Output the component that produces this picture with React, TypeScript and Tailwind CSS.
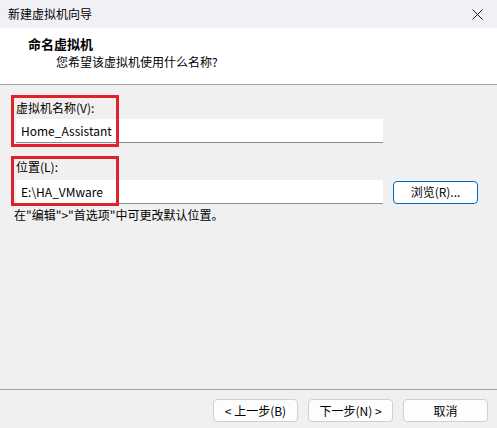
export default function App() {
  const font = { fontFamily: '"Noto Sans CJK SC", "Liberation Sans", sans-serif' };

  return (
    <div
      className="relative flex flex-col w-[497px] h-[428px] bg-[#f0f0f0] text-[12px] text-black overflow-hidden"
      style={font}
    >
      {/* title bar */}
      <div className="flex items-center justify-between h-[28px] bg-[#f0f1f5] pl-[8px] pr-[14px]">
        <span className="leading-[16px]">新建虚拟机向导</span>
        <svg width="11" height="11" viewBox="0 0 11 11">
          <path d="M0.5 0.5 L10.5 10.5 M10.5 0.5 L0.5 10.5" stroke="#1a1a1a" strokeWidth="1" />
        </svg>
      </div>

      {/* header */}
      <div className="h-[57px] bg-white border-b border-[#a0a0a0] pl-[28px] pt-[7px]">
        <div className="font-bold text-[13px] leading-[17px]">命名虚拟机</div>
        <div className="pl-[28px] mt-[1px] leading-[17px]">您希望该虚拟机使用什么名称?</div>
      </div>

      {/* body */}
      <div className="flex-1 pl-[16px] pr-[19px]">
        <div className="mt-[15px] leading-[16px]">虚拟机名称(V):</div>
        <div className="mt-[3px] h-[24px] w-[367px] bg-white border-b border-[#8c8c8c] pl-[5px] flex items-center">
          Home_Assistant
        </div>

        <div className="mt-[16px] leading-[16px]">位置(L):</div>
        <div className="mt-[5px] flex items-center">
          <div className="h-[24px] w-[367px] bg-white border-b border-[#8c8c8c] pl-[5px] flex items-center">
            E:\HA_VMware
          </div>
          <button
            type="button"
            className="ml-[10px] h-[23px] w-[85px] bg-white border border-[#0067c0] rounded-[4px] text-[12px] leading-[16px]"
          >
            浏览(R)...
          </button>
        </div>

        <div className="mt-[3px] -ml-[2px] leading-[16px]">在"编辑"&gt;"首选项"中可更改默认位置。</div>
      </div>

      {/* footer */}
      <div className="h-[39px] border-t border-[#a0a0a0] flex justify-end gap-[10px] pt-[9px] pr-[9px]">
        <button type="button" className="h-[23px] w-[85px] bg-[#fdfdfd] border border-[#d0d0d0] rounded-[4px] leading-[16px]">
          &lt; 上一步(B)
        </button>
        <button type="button" className="h-[23px] w-[85px] bg-[#fdfdfd] border border-[#d0d0d0] rounded-[4px] leading-[16px]">
          下一步(N) &gt;
        </button>
        <button type="button" className="h-[23px] w-[85px] bg-[#fdfdfd] border border-[#d0d0d0] rounded-[4px] leading-[16px]">
          取消
        </button>
      </div>

      {/* annotation boxes */}
      <div className="absolute left-[11px] top-[95px] w-[108px] h-[52px] border-[3px] border-[#e1222b]" />
      <div className="absolute left-[11px] top-[156px] w-[108px] h-[50px] border-[3px] border-[#e1222b]" />
    </div>
  );
}
